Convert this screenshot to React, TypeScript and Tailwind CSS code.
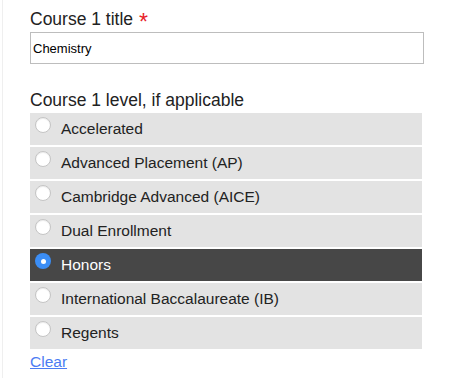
import { useState } from "react"

const levels = [
  "Accelerated",
  "Advanced Placement (AP)",
  "Cambridge Advanced (AICE)",
  "Dual Enrollment",
  "Honors",
  "International Baccalaureate (IB)",
  "Regents",
]

const Radio = ({ checked }: { checked: boolean }) => {
  if (checked) {
    return (
      <span className="mt-[4px] flex h-[16px] w-[16px] shrink-0 items-center justify-center rounded-full bg-[#3b8ef6]">
        <span className="h-[5px] w-[5px] rounded-full bg-white" />
      </span>
    )
  }
  return (
    <span className="mt-[4px] h-[16px] w-[16px] shrink-0 rounded-full border border-[#c4c4c4] bg-white shadow-[inset_0_1px_1px_rgba(0,0,0,0.08)]" />
  )
}

export default function App() {
  const [selected, setSelected] = useState("Honors")

  return (
    <div
      className="min-h-[378px] w-[475px] bg-white text-[#222]"
      style={{ fontFamily: '"Liberation Sans", Arial, sans-serif' }}
    >
      <div className="ml-[2px] min-h-[378px] border-l border-[#efefef] pl-[27px] pt-[9px] pr-[50px]">
        {/* title */}
        <div className="mb-[3px] h-[20px] text-[17.5px] leading-[20px]">
          Course 1 title{" "}
          <span className="ml-[1px] align-[-5px] text-[23px] leading-none text-[#e8232b]">*</span>
        </div>
        <input
          readOnly
          value="Chemistry"
          className="block h-[32px] w-[394px] border border-[#bdbdbd] bg-white px-[2px] text-[13px] text-black outline-none"
        />

        {/* level */}
        <div className="mt-[26px] mb-[3px] h-[20px] text-[17.5px] leading-[20px]">
          Course 1 level, if applicable
        </div>
        <div className="flex w-[392px] flex-col gap-[2px]">
          {levels.map((level) => {
            const active = selected === level
            return (
              <label
                key={level}
                onClick={() => setSelected(level)}
                className={`flex h-[32px] cursor-pointer items-start gap-[10px] pl-[5px] ${
                  active ? "bg-[#474747] text-white" : "bg-[#e3e3e3] text-[#222]"
                }`}
              >
                <Radio checked={active} />
                <span className="self-center text-[15.5px] leading-[20px]">{level}</span>
              </label>
            )
          })}
        </div>
        <a
          href="#"
          onClick={(e) => {
            e.preventDefault()
            setSelected("")
          }}
          className="mt-[3px] inline-block text-[15.5px] leading-[20px] text-[#4b7cf3] underline"
        >
          Clear
        </a>
      </div>
    </div>
  )
}
